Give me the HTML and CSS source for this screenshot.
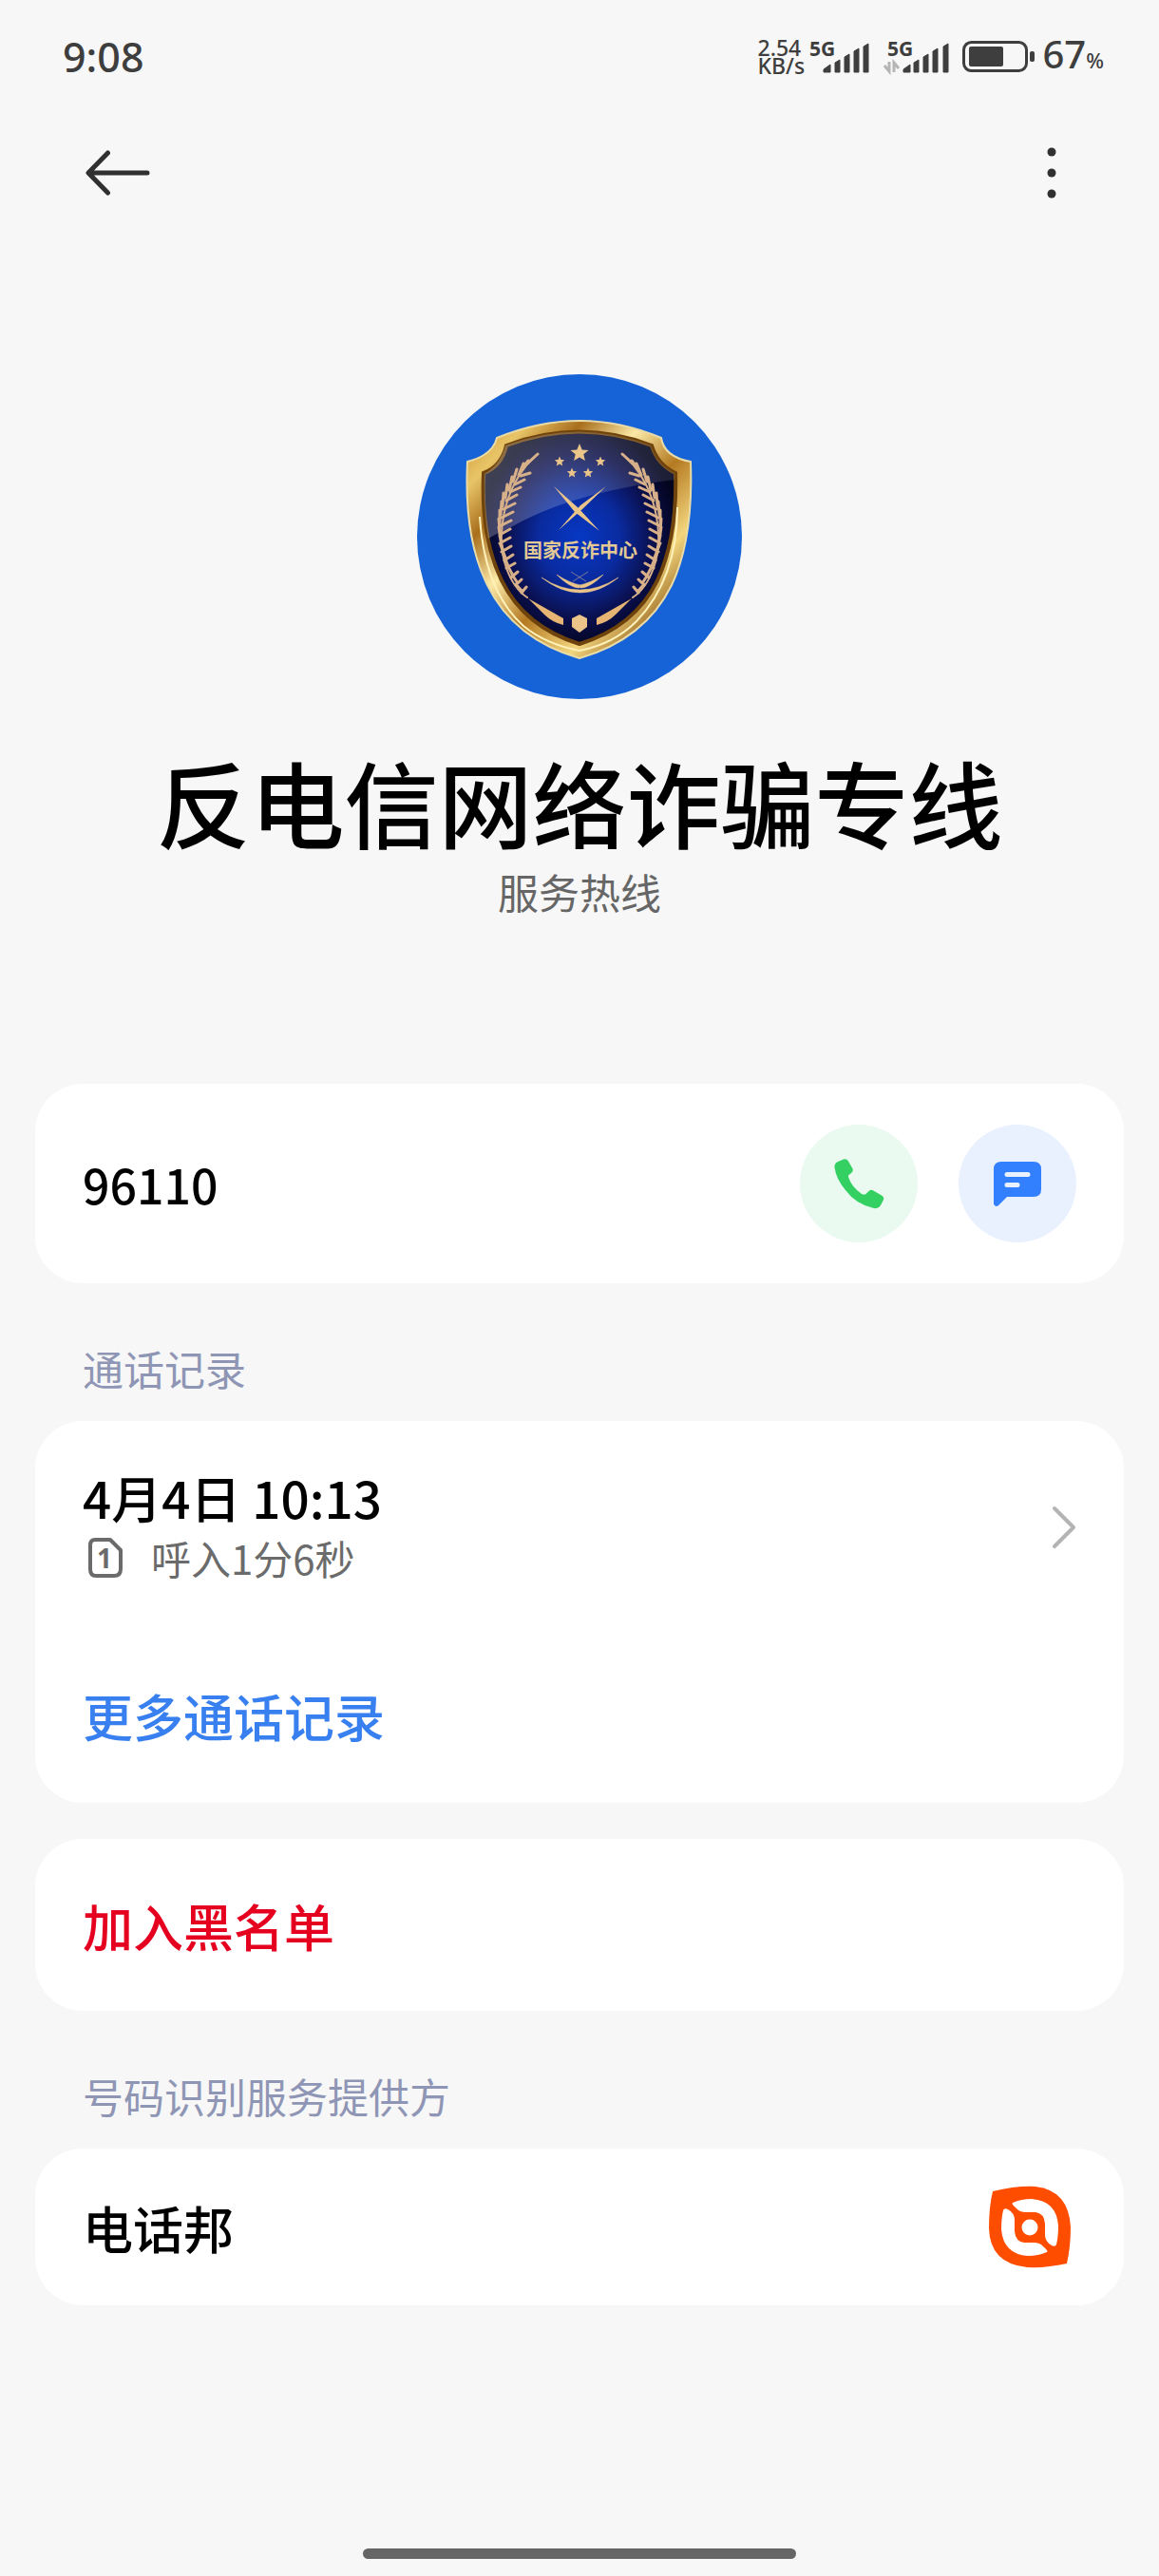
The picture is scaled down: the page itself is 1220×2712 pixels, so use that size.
FILE: index.html
```html
<!DOCTYPE html>
<html lang="zh-CN">
<head>
<meta charset="utf-8">
<meta name="viewport" content="width=device-width, initial-scale=1">
<title>反电信网络诈骗专线</title>
<link rel="stylesheet" href="styles.css">
</head>
<body>
<div class="screen">
  <div class="status">
    <span class="clock">9:08</span>
    <div class="indicators">
      <div class="speed"><span>2.54</span><span>KB/s</span></div>
      <svg class="signal" width="66" height="56" viewBox="0 -10 66 56" aria-label="5G">
        <text class="net" x="1" y="17">5G</text>
        <g class="bars">
          <path d="M16 31l7-5v8h-7z"/><path d="M28 24l5-3v13h-5z"/><path d="M38 18l5-3v19h-5z"/><path d="M48 12l5-3v25h-5z"/><path d="M58 7l5-3v30h-5z"/>
        </g>
      </svg>
      <svg class="signal second" width="70" height="56" viewBox="0 -10 70 56" aria-label="5G">
        <text class="net" x="4" y="17">5G</text>
        <path class="traffic" d="M6 23v10l-5-6M11 34V24l5 6"/>
        <g class="bars">
          <path d="M21 31l7-5v8h-7z"/><path d="M32 24l5-3v13h-5z"/><path d="M42 18l5-3v19h-5z"/><path d="M52 12l5-3v25h-5z"/><path d="M63 7l5-3v30h-5z"/>
        </g>
      </svg>
      <svg class="battery" width="76" height="34" viewBox="0 0 76 34" aria-hidden="true">
        <rect x="1.5" y="1.5" width="66" height="30" rx="8" fill="none" stroke="#3e3e3e" stroke-width="3"/>
        <rect x="7" y="6" width="36" height="21" rx="2" fill="#3e3e3e"/>
        <rect x="71" y="11" width="5" height="11" rx="2" fill="#3e3e3e"/>
      </svg>
      <span class="percent">67<small>%</small></span>
    </div>
  </div>

  <header class="toolbar">
    <button class="icon-btn" aria-label="返回">
      <svg width="68" height="48" viewBox="0 0 68 48" fill="none" stroke="#303030" stroke-width="5" stroke-linecap="round" stroke-linejoin="round"><path d="M23.500 3L3 24l20.500 21M4 24h61"/></svg>
    </button>
    <button class="icon-btn" aria-label="更多选项">
      <svg width="10" height="54" viewBox="0 0 10 54" fill="#303030"><circle cx="5" cy="5" r="4.500"/><circle cx="5" cy="27" r="4.500"/><circle cx="5" cy="49" r="4.500"/></svg>
    </button>
  </header>

  <main>
    <section class="profile">
      <svg class="avatar" viewBox="0 0 342 342" role="img" aria-label="国家反诈中心">
        <defs>
          <linearGradient id="gold" x1="0" y1="0" x2="1" y2="1">
            <stop offset="0" stop-color="#c98f2c"/><stop offset=".14" stop-color="#e9c568"/><stop offset=".26" stop-color="#a86e1c"/><stop offset=".4" stop-color="#fbe9a6"/><stop offset=".55" stop-color="#b47a22"/><stop offset=".72" stop-color="#f3d67e"/><stop offset=".88" stop-color="#8a5512"/><stop offset="1" stop-color="#e0b050"/>
          </linearGradient>
          <radialGradient id="field" cx=".5" cy=".5" r=".52">
            <stop offset="0" stop-color="#0638c4"/><stop offset=".4" stop-color="#0a2ba0"/><stop offset=".74" stop-color="#0a0f4c"/><stop offset="1" stop-color="#03051f"/>
          </radialGradient>
          <linearGradient id="gloss" x1="0" y1="0" x2="1" y2="0">
            <stop offset="0" stop-color="#fff" stop-opacity=".24"/><stop offset="1" stop-color="#fff" stop-opacity=".1"/>
          </linearGradient>
          <path id="star" d="M0-10L2.700-3.500 9.500-3.100 4.300 1.300 5.900 8.100 0 4.400-5.900 8.100-4.300 1.300-9.500-3.100-2.700-3.500z"/>
          <g id="wreath" fill="none" stroke="#d7b08a" stroke-linecap="round">
            <path d="M127 84L115 96C92 124 82 170 94 204q8 22 22 31" stroke-width="2"/>
            <path d="M127 84l-10 9M117 91l-7 9M119 104l-10 3M112 94l-5 12M113 111l-10 5M105 100l-4 13M109 119l-11 5M100 108l-3 14M105 127l-11 6M95 116l-2 14M103 136l-12 6M91 125l-1 14M101 145l-12 6M89 134l-1 14M99 154l-12 6M87 143l0 14M98 163l-11 6M86 152l1 14M98 172l-11 6M86 161l2 14M99 181l-10 6M87 170l3 14M101 190l-9 6M88 180l5 13M103 199l-9 5M91 190l5 12M106 208l-7 6M95 201l6 11M110 216l-6 6M100 211l6 9M115 224l-5 6M104 221l7 8" stroke-width="3"/>
            <path d="M117 236l37 21v7q-12-3-20-11z" fill="#e6b574" stroke="none"/>
          </g>
        </defs>
        <circle cx="171" cy="171" r="171" fill="#1663d8"/>
        <path d="M84 67q88-36 173 0q3 20 31 25q3 82-20 130q-28 57-97 77q-69-20-97-77Q49 172 53 92q27-7 31-25z" fill="url(#gold)" stroke="#e9dba8" stroke-width="2"/>
        <path d="M94 75q77-29 153 0q6 20 25 29q2 68-19 113q-24 49-82 67q-58-18-82-67Q67 172 70 104q19-7 24-29z" fill="url(#field)" stroke="#6f430c" stroke-width="4"/>
        <path d="M71 105q-1 37 4 68q8-5 22-11Q160 125 271 111v-7q-19-9-25-29q-76-29-153 0q-5 20-22 30z" fill="url(#gloss)"/>
        <path d="M66 150q5 78 46 115q23 19 59 26q36-7 60-31q43-45 43-120" fill="none" stroke="#fff1ba" stroke-width="2"/>
        <use href="#wreath"/>
        <use href="#wreath" transform="matrix(-1 0 0 1 343 0)"/>
        <g fill="#eac489">
          <use href="#star" x="171" y="83"/>
          <use href="#star" transform="translate(150 92) scale(.55)"/><use href="#star" transform="translate(193 92) scale(.55)"/><use href="#star" transform="translate(163 104) scale(.55)"/><use href="#star" transform="translate(180 104) scale(.55)"/>
          <path d="M144 118l26 23 22 24-26-20zM199 118l-25 24-25 22 23-26z"/>
          <path d="M131 214q40 26 81 0q-40 32-81 0zM147 211q14 14 24 14l1-3q-11-2-25-11zM196 211q-14 14-24 14l-1-3q11-2 25-11zM162 208l16 10M180 208l-16 10" stroke="#eac489" stroke-width=".5"/>
          <path d="M171 253l8 4v9l-8 6-8-6v-9z"/>
        </g>
        <text class="badge-name" x="172" y="193" text-anchor="middle">国家反诈中心</text>
      </svg>
      <h1>反电信网络诈骗专线</h1>
      <p>服务热线</p>
    </section>

    <section class="card number">
      <span class="phone">96110</span>
      <div class="actions">
        <button class="round call" aria-label="拨打电话">
          <svg width="54" height="54" viewBox="0 0 54 54" fill="#34d062"><path d="M5 4l6-2.500q3-1 5 2l4 7q2 3-1 5.500l-2.500 2q-1 1 0 3.500Q20 31 30 38q3 1 4.500 0l3-3q2-2 4-1l9.500 5.500q3 2 2 4.500l-2.500 5Q48 54 43 53Q24 49 13 34Q3 22 1.500 10Q1 6 5 4z"/></svg>
        </button>
        <button class="round message" aria-label="发送短信">
          <svg width="50" height="50" viewBox="0 0 50 50"><path d="M8 2h34q8 0 8 8v21q0 8-8 8H14L4.500 48.500Q1 50 0 46.500V10q0-8 8-8z" fill="#3380ff"/><path d="M14 15.500h22M14 26.500h11" stroke="#e9f1fe" stroke-width="5" stroke-linecap="round"/></svg>
        </button>
      </div>
    </section>

    <h2>通话记录</h2>
    <section class="card log">
      <a class="entry" href="#detail">
        <span class="entry-text">
          <span class="primary">4月4日 10:13</span>
          <span class="detail">
            <svg width="36" height="42" viewBox="0 0 36 42"><path d="M7 2h16l11 11v20q0 7-7 7H8q-6 0-6-7V8q0-6 5-6z" fill="none" stroke="#6b6b6b" stroke-width="4" stroke-linejoin="round"/><text class="sim" x="17" y="32" text-anchor="middle">1</text></svg>
            <span>呼入1分6秒</span>
          </span>
        </span>
        <svg width="26" height="46" viewBox="0 0 26 46" fill="none" stroke="#b3b3b3" stroke-width="4" stroke-linecap="round" stroke-linejoin="round"><path d="M3 3l20 20L3 43"/></svg>
      </a>
      <a class="more" href="#all">更多通话记录</a>
    </section>

    <button class="card block">加入黑名单</button>

    <h2>号码识别服务提供方</h2>
    <section class="card provider">
      <span class="primary">电话邦</span>
      <svg width="88" height="88" viewBox="0 0 88 88"><path d="M5 6Q30 0 50 1q35 4 37 43 0 20-4 38-22 5-42 4Q2 82 1 45 1 22 5 6z" fill="#ff4d00"/><g fill="#fff"><path id="blade" d="M26 18Q35 14 46 14q26 2 28 28 0 12-2 20-1 3-5 1-7-4-7-11V40q-1-11-10-12H40q-7 0-10-4-6-5-4-6z"/><use href="#blade" transform="rotate(180 44 44)"/><circle cx="44" cy="44" r="8.500"/></g></svg>
    </section>
  </main>
  <div class="home-bar"></div>
</div>
</body>
</html>
```
FILE: styles.css
```css
* { box-sizing: border-box; }
body {
  margin: 0;
  background: #f7f7f7;
  color: #000;
  font-family: "Noto Sans CJK SC", sans-serif;
}
button { border: 0; padding: 0; background: none; font: inherit; cursor: pointer; }
a { color: inherit; text-decoration: none; }
svg { display: block; flex: none; }
h1, h2, p { margin: 0; }

.screen { display: flex; flex-direction: column; min-height: 100vh; padding-bottom: 18px; }

.status {
  display: flex;
  justify-content: space-between;
  align-items: center;
  height: 120px;
  padding: 0 58px 0 66px;
  color: #3e3e3e;
  font-family: "Noto Sans", sans-serif;
}
.clock { font-size: 43px; line-height: 56px; font-weight: 500; }
.indicators { display: flex; align-items: center; }
.speed { display: flex; flex-direction: column; width: 54px; font-size: 23px; line-height: 19px; font-weight: 500; }
.net { font: 700 21px "Noto Sans", sans-serif; fill: #3e3e3e; }
.bars { fill: #3e3e3e; stroke: #3e3e3e; stroke-width: 1; stroke-linejoin: round; }
.traffic { fill: none; stroke: #b5b5b5; stroke-width: 3; }
.second { margin-left: 13px; }
.battery { margin-left: 13px; }
.percent { margin-left: 8px; font-size: 40px; line-height: 56px; font-weight: 500; }
.percent small { font-size: 22px; }

.toolbar { display: flex; justify-content: space-between; align-items: center; height: 124px; padding: 0 108px 0 90px; }

.profile { display: flex; flex-direction: column; align-items: center; padding-top: 150px; }
.avatar { width: 342px; height: 342px; }
.badge-name { font: 700 20px "Noto Sans CJK SC", sans-serif; fill: #e3c994; }
h1 { margin-top: 42px; font-size: 99px; line-height: 130px; font-weight: 500; text-align: center; }
.profile p { font-size: 43px; line-height: 60px; color: #666; }

main { padding: 0 37px; }
.card { display: flex; width: 100%; padding: 0 50px; border-radius: 50px; background: #fff; }
.primary, .more, .block { font-size: 53px; line-height: 64px; font-weight: 500; }
.number { justify-content: space-between; align-items: center; min-height: 210px; margin-top: 173px; }
.phone { font-size: 50px; line-height: 64px; font-weight: 500; }
.actions { display: flex; gap: 43px; }
.round { display: grid; place-items: center; width: 124px; height: 124px; border-radius: 50%; }
.call { background: #eafaf0; }
.message { background: #e9f1fe; }

h2 { padding: 61px 50px 28px; font-size: 43px; line-height: 56px; font-weight: 400; color: #8f96b5; }

.log { flex-direction: column; padding-top: 48px; padding-bottom: 60px; }
.entry { display: flex; justify-content: space-between; align-items: center; }
.entry-text { display: flex; flex-direction: column; }
.detail { display: flex; align-items: center; gap: 30px; padding-left: 6px; font-size: 42px; line-height: 64px; color: #6b6b6b; }
.sim { font: 700 28px "Noto Sans", sans-serif; fill: #6b6b6b; }
.more { margin-top: 102px; color: #3880f0; }

.block { align-items: center; min-height: 181px; margin-top: 38px; color: #e60020; }
.provider { justify-content: space-between; align-items: center; min-height: 165px; padding-right: 55px; }

.home-bar { align-self: center; width: 456px; height: 11px; margin-top: auto; border-radius: 6px; background: #666; }
```
